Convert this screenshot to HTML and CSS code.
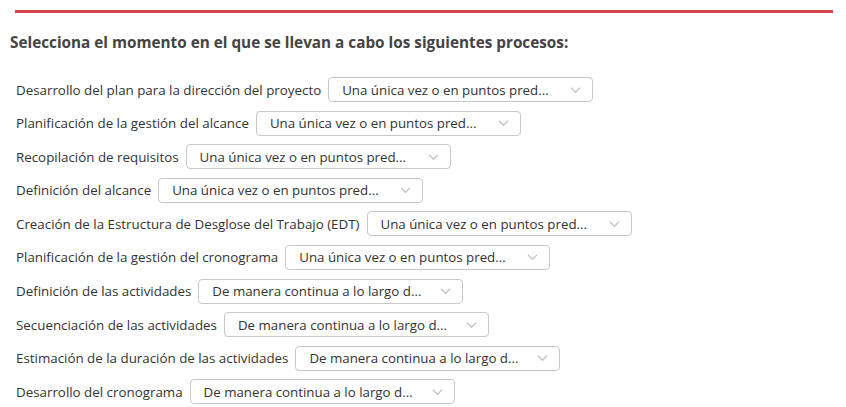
FILE: index.html
```html
<!DOCTYPE html>
<html lang="es">
<head>
<meta charset="utf-8">
<link rel="stylesheet" href="styles.css">
</head>
<body>
<div class="page">
  <div class="rule"></div>
  <h2 class="title">Selecciona el momento en el que se llevan a cabo los siguientes procesos:</h2>
  <div class="rows">
    <div class="row"><span class="label">Desarrollo del plan para la dirección del proyecto</span><div class="select"><span>Una única vez o en puntos pred...</span><svg class="chev" viewBox="0 0 12 8"><path d="M1 1.5 6 6.5 11 1.5"/></svg></div></div>
    <div class="row"><span class="label">Planificación de la gestión del alcance</span><div class="select"><span>Una única vez o en puntos pred...</span><svg class="chev" viewBox="0 0 12 8"><path d="M1 1.5 6 6.5 11 1.5"/></svg></div></div>
    <div class="row"><span class="label">Recopilación de requisitos</span><div class="select"><span>Una única vez o en puntos pred...</span><svg class="chev" viewBox="0 0 12 8"><path d="M1 1.5 6 6.5 11 1.5"/></svg></div></div>
    <div class="row"><span class="label">Definición del alcance</span><div class="select"><span>Una única vez o en puntos pred...</span><svg class="chev" viewBox="0 0 12 8"><path d="M1 1.5 6 6.5 11 1.5"/></svg></div></div>
    <div class="row"><span class="label">Creación de la Estructura de Desglose del Trabajo (EDT)</span><div class="select"><span>Una única vez o en puntos pred...</span><svg class="chev" viewBox="0 0 12 8"><path d="M1 1.5 6 6.5 11 1.5"/></svg></div></div>
    <div class="row"><span class="label">Planificación de la gestión del cronograma</span><div class="select"><span>Una única vez o en puntos pred...</span><svg class="chev" viewBox="0 0 12 8"><path d="M1 1.5 6 6.5 11 1.5"/></svg></div></div>
    <div class="row"><span class="label">Definición de las actividades</span><div class="select"><span>De manera continua a lo largo d...</span><svg class="chev" viewBox="0 0 12 8"><path d="M1 1.5 6 6.5 11 1.5"/></svg></div></div>
    <div class="row"><span class="label">Secuenciación de las actividades</span><div class="select"><span>De manera continua a lo largo d...</span><svg class="chev" viewBox="0 0 12 8"><path d="M1 1.5 6 6.5 11 1.5"/></svg></div></div>
    <div class="row"><span class="label">Estimación de la duración de las actividades</span><div class="select"><span>De manera continua a lo largo d...</span><svg class="chev" viewBox="0 0 12 8"><path d="M1 1.5 6 6.5 11 1.5"/></svg></div></div>
    <div class="row"><span class="label">Desarrollo del cronograma</span><div class="select"><span>De manera continua a lo largo d...</span><svg class="chev" viewBox="0 0 12 8"><path d="M1 1.5 6 6.5 11 1.5"/></svg></div></div>
  </div>
</div>
</body>
</html>
```
FILE: styles.css
```css
html, body {
  margin: 0;
  padding: 0;
  background: #ffffff;
}
body {
  font-family: "Open Sans", "Liberation Sans", sans-serif;
  color: #333333;
}
.page {
  padding: 10px 13px 0 10px;
}
.rule {
  height: 3px;
  background: #d2474f;
  margin: 0 0 0 5px;
}
.title {
  margin: 18px 0 0 0;
  font-size: 15.3px;
  font-weight: 700;
  line-height: 22px;
  color: #444444;
}
.rows {
  margin-top: 24px;
  padding-left: 6px;
  display: flex;
  flex-direction: column;
  gap: 8.6px;
}
.row {
  display: flex;
  align-items: center;
  height: 25px;
}
.label {
  font-size: 13.35px;
  color: #333333;
  margin-right: 7px;
  white-space: nowrap;
}
.select {
  box-sizing: border-box;
  width: 265px;
  height: 25px;
  border: 1px solid #c8c8c8;
  border-radius: 4px;
  display: flex;
  align-items: center;
  justify-content: space-between;
  padding: 0 11px 0 13px;
  font-size: 13.3px;
  color: #333333;
  background: #ffffff;
}
.chev {
  width: 11px;
  height: 8px;
  fill: none;
  stroke: #c4c4c4;
  stroke-width: 1.4;
}
```
